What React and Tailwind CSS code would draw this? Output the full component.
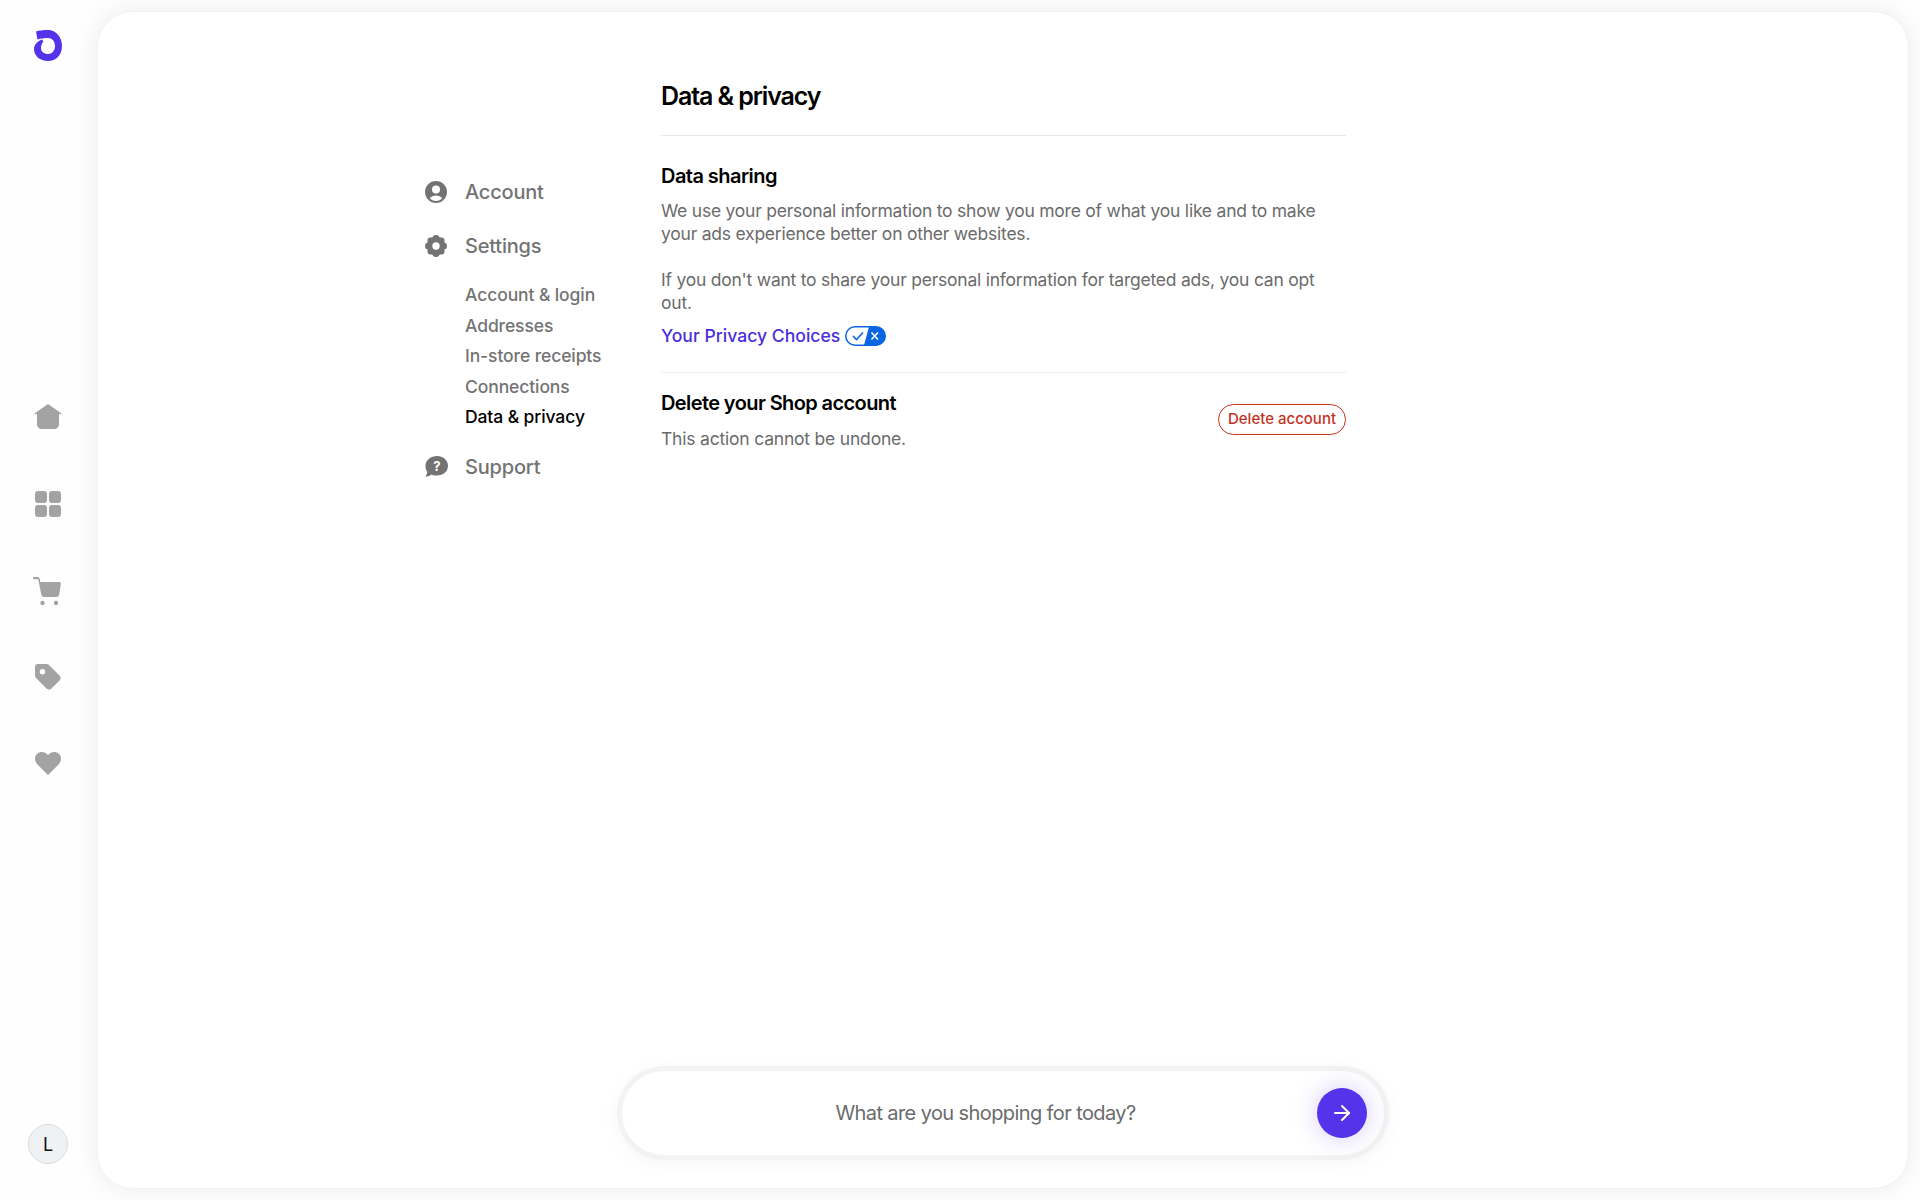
import { ArrowRight } from 'lucide-react';

const Logo = () => (
  <svg width="28" height="31" viewBox="0 0 28 31">
    <path d="M2 1.5 C5 .5 9 0 14 0 C22 0 28 7 28 16 C28 25 22 31 14 31 C6 31 0 26 0 19 C0 15 3 11.5 8 9.5 L9.5 11.5 C7.8 13 7 15.5 7 18 C7 21.5 10 24 14 24 C18 24 21 20.5 21 16 C21 11 18 8 14 8 C10 8 7 8.5 3.5 9.5 Z" fill="#5433eb" />
  </svg>
);

const HomeIcon = () => (
  <svg width="28" height="26" viewBox="0 0 28 26" fill="#a3a3a3">
    <path d="M14 0 L27.5 9.5 L27 10.5 L25 9.8 V20 C25 23.5 23 25 20 25 H8 C5 25 3 23.5 3 20 V9.8 L1 10.5 L.5 9.5 Z" />
  </svg>
);

const GridIcon = () => (
  <svg width="26" height="26" viewBox="0 0 26 26" fill="#a3a3a3">
    <rect x="0" y="0" width="12" height="12" rx="3" />
    <rect x="14" y="0" width="12" height="12" rx="3" />
    <rect x="0" y="14" width="12" height="12" rx="3" />
    <rect x="14" y="14" width="12" height="12" rx="3" />
  </svg>
);

const CartIcon = () => (
  <svg className="mt-[3px] mr-[2px]" width="28" height="29" viewBox="0 0 28 29" fill="#a3a3a3">
    <path d="M0 0 H4.5 C5.8 0 6.5 .7 6.8 2 L7.3 5 H26 C27.3 5 28 5.8 27.8 7 L26.3 17 C26 19 25 20 23 20 H11.5 C9.5 20 8.5 19 8.2 17 L5.2 2.2 H.6 Z" />
    <circle cx="9.5" cy="26" r="2.2" />
    <circle cx="23" cy="26" r="2.2" />
  </svg>
);

const TagIcon = () => (
  <svg width="26" height="26" viewBox="0 0 26 26" fill="#a3a3a3" fillRule="evenodd">
    <path d="M3 0 H11 C12.5 0 13.5 .5 14.5 1.5 L24.5 11.5 C26 13 26 15 24.5 16.5 L16.5 24.5 C15 26 13 26 11.5 24.5 L1.5 14.5 C.5 13.5 0 12.5 0 11 V3 C0 1.2 1.2 0 3 0 Z M7.5 5 A2.7 2.7 0 1 0 7.5 10.4 A2.7 2.7 0 1 0 7.5 5 Z" />
  </svg>
);

const HeartIcon = () => (
  <svg width="26" height="23" viewBox="0 0 26 23" fill="#a3a3a3">
    <path d="M13 23 L2.5 12.5 C-.8 9 -.8 4 2.5 1.6 C5.5 -.8 10 -.4 13 3 C16 -.4 20.5 -.8 23.5 1.6 C26.8 4 26.8 9 23.5 12.5 Z" />
  </svg>
);

const AccountIcon = () => (
  <svg width="22" height="22" viewBox="0 0 22 22" fill="#737373" fillRule="evenodd">
    <path d="M11 0 A11 11 0 1 1 11 22 A11 11 0 1 1 11 0 Z M11 4.5 A4 4 0 1 0 11 12.5 A4 4 0 1 0 11 4.5 Z M4.8 17.2 C6.3 19 8.5 20 11 20 C13.5 20 15.7 19 17.2 17.2 C15.8 15.3 13.5 14.4 11 14.4 C8.5 14.4 6.2 15.3 4.8 17.2 Z" />
  </svg>
);

const GearIcon = () => (
  <svg width="22" height="22" viewBox="0 0 22 22" fill="#737373" fillRule="evenodd">
    <path d="M8.5 .8 C9.5 -.2 12.5 -.2 13.5 .8 L14.8 2.6 L17 2.5 C18.4 2.6 19.4 3.6 19.5 5 L19.4 7.2 L21.2 8.5 C22.2 9.5 22.2 12.5 21.2 13.5 L19.4 14.8 L19.5 17 C19.4 18.4 18.4 19.4 17 19.5 L14.8 19.4 L13.5 21.2 C12.5 22.2 9.5 22.2 8.5 21.2 L7.2 19.4 L5 19.5 C3.6 19.4 2.6 18.4 2.5 17 L2.6 14.8 L.8 13.5 C-.2 12.5 -.2 9.5 .8 8.5 L2.6 7.2 L2.5 5 C2.6 3.6 3.6 2.6 5 2.5 L7.2 2.6 Z M11 7.3 A3.7 3.7 0 1 0 11 14.7 A3.7 3.7 0 1 0 11 7.3 Z" />
  </svg>
);

const SupportIcon = () => (
  <svg width="23" height="21" viewBox="0 0 23 21" fill="#737373">
    <path d="M12 0 C18 0 23 4 23 9.8 C23 15.6 18 19.6 12 19.6 C10 19.6 8 19.2 6.5 18.4 C4.5 20 2.5 20.6 .4 20.4 C1.6 19 2.2 17.4 2.2 15.8 C1 14.2 .5 12 .5 9.8 C.5 4 6 0 12 0 Z" />
    <text x="11.8" y="14.6" textAnchor="middle" fontFamily="Inter, sans-serif" fontSize="13" fontWeight="700" fill="#ffffff">?</text>
  </svg>
);

const PrivacyToggle = () => (
  <svg width="41" height="20" viewBox="0 0 41 20">
    <rect x=".75" y=".75" width="39.5" height="18.5" rx="9.25" fill="#ffffff" stroke="#0a66e0" strokeWidth="1.5" />
    <path d="M24 .75 H31 A9.25 9.25 0 0 1 31 19.25 H19 Z" fill="#0a66e0" />
    <path d="M8 10 L11.5 13.5 L18 6.5" fill="none" stroke="#0a66e0" strokeWidth="1.6" />
    <path d="M26.5 6.5 L33 13.5 M33 6.5 L26.5 13.5" fill="none" stroke="#ffffff" strokeWidth="1.6" />
  </svg>
);

const SideItem = ({ children }) => (
  <div className="w-full h-[86.6px] flex items-center justify-center">{children}</div>
);

export default function App() {
  return (
    <div className="h-[1200px] w-full flex bg-[#fefefe] overflow-hidden font-['Inter',sans-serif]">
      {/* Sidebar */}
      <aside className="w-[97px] shrink-0 h-full pr-[1px] flex flex-col items-center pt-[30px] pb-[36px]">
        <Logo />
        <div className="flex flex-col items-center w-full mt-[313px]">
          <SideItem><HomeIcon /></SideItem>
          <SideItem><GridIcon /></SideItem>
          <SideItem><CartIcon /></SideItem>
          <SideItem><TagIcon /></SideItem>
          <SideItem><HeartIcon /></SideItem>
        </div>
        <div className="mt-auto w-10 h-10 rounded-full bg-[#f0f1f2] border border-[#dcdcdc] flex items-center justify-center text-[18px] text-[#111111]">
          L
        </div>
      </aside>

      {/* Main card */}
      <main className="flex-1 my-[11px] mr-[11px] bg-white rounded-[36px] border border-[#f2f2f2] shadow-[0_0_28px_rgba(0,0,0,0.07)] flex flex-col">
        <div className="flex-1 flex pl-[327px]">
          {/* Settings nav */}
          <nav className="w-[236px] shrink-0 pt-[164px] text-[#737373]">
            <div className="flex items-center h-8 gap-[18px] text-[20px] font-medium tracking-[-0.2px]">
              <AccountIcon />
              <span>Account</span>
            </div>
            <div className="flex items-center h-8 gap-[18px] mt-[22px] text-[20px] font-medium tracking-[-0.2px]">
              <GearIcon />
              <span>Settings</span>
            </div>
            <div className="flex flex-col pl-10 mt-[18px] text-[17.5px] font-medium tracking-[-0.1px]">
              <span className="h-[30.5px] leading-[30.5px]">Account &amp; login</span>
              <span className="h-[30.5px] leading-[30.5px]">Addresses</span>
              <span className="h-[30.5px] leading-[30.5px]">In-store receipts</span>
              <span className="h-[30.5px] leading-[30.5px]">Connections</span>
              <span className="h-[30.5px] leading-[30.5px] text-black">Data &amp; privacy</span>
            </div>
            <div className="flex items-center h-8 gap-[17px] mt-[18px] text-[20px] font-medium tracking-[-0.2px]">
              <SupportIcon />
              <span>Support</span>
            </div>
          </nav>

          {/* Content */}
          <section className="w-[685px] shrink-0 pt-[66px]">
            <h1 className="text-[25px] leading-9 font-semibold tracking-[-1.1px] text-black pb-[21px] border-b border-[#e8e8e8]">
              Data &amp; privacy
            </h1>
            <div className="pt-[25.5px] pb-[24.5px] border-b border-[#ededed]">
              <h2 className="text-[20px] leading-7 font-semibold tracking-[-0.55px] text-black">Data sharing</h2>
              <p className="mt-[9.5px] text-[17.5px] leading-[23px] text-[#6b6b6b] tracking-[-0.23px]">
                We use your personal information to show you more of what you like and to make your ads experience better on other websites.
              </p>
              <p className="mt-[23px] text-[17.5px] leading-[23px] text-[#6b6b6b] tracking-[-0.23px]">
                If you don't want to share your personal information for targeted ads, you can opt out.
              </p>
              <a className="mt-[10px] flex items-center gap-[5px] text-[17.6px] leading-[23px] font-medium text-[#4a2fdb]">
                Your Privacy Choices
                <PrivacyToggle />
              </a>
            </div>
            <div className="flex items-center justify-between pt-4">
              <div>
                <h2 className="text-[20px] leading-7 font-semibold tracking-[-0.6px] text-black">Delete your Shop account</h2>
                <p className="mt-[10.5px] text-[17.5px] leading-[23px] text-[#6b6b6b] tracking-[-0.2px]">This action cannot be undone.</p>
              </div>
              <button className="h-[31px] w-[128px] rounded-full border-[1.5px] border-[#c9321f] text-[15px] font-medium text-[#c4321f] flex items-center justify-center">
                Delete account
              </button>
            </div>
          </section>
        </div>

        {/* Search bar */}
        <div className="pl-[524px] pb-[33px]">
          <div className="w-[762px] h-[84px] rounded-full bg-white shadow-[0_0_0_5px_#f3f3f3,0_4px_24px_rgba(0,0,0,0.06)] flex items-center pl-8 pr-[17px]">
            <span className="flex-1 text-center text-[20px] text-[#6b6b6b] tracking-[-0.6px]">What are you shopping for today?</span>
            <button className="w-[50px] h-[50px] rounded-full bg-[#5433eb] shadow-[0_0_24px_rgba(84,51,235,0.25)] flex items-center justify-center text-white">
              <ArrowRight size={24} strokeWidth={2} />
            </button>
          </div>
        </div>
      </main>
    </div>
  );
}
